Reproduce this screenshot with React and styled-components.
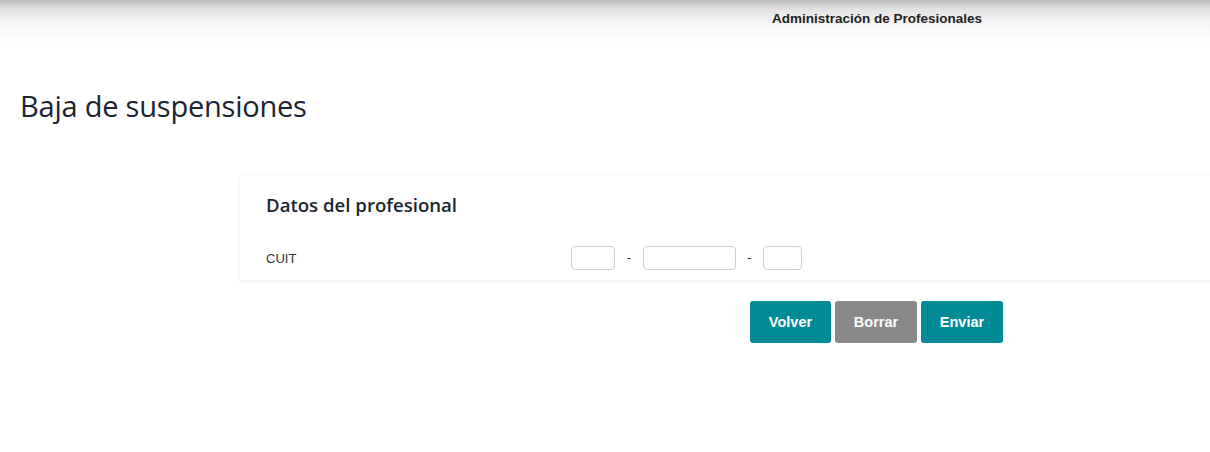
import React from "react";
import styled, { createGlobalStyle } from "styled-components";

const Global = createGlobalStyle`
  html, body { margin: 0; padding: 0; background: #fff; }
  body { font-family: "Liberation Sans", Arial, sans-serif; overflow: hidden; }
  * { box-sizing: border-box; }
`;

const Page = styled.div`
  width: 1210px;
  min-height: 452px;
  background: #fff;
`;

const Header = styled.header`
  height: 48px;
  background: linear-gradient(to bottom, #bdbdbd 0px, #e4e4e4 10px, #f6f6f6 24px, #ffffff 44px);
  display: flex;
  padding-left: 772px;
  padding-top: 11px;
`;

const HeaderTitle = styled.span`
  font-family: "Liberation Sans", Arial, sans-serif;
  font-weight: bold;
  font-size: 13.5px;
  color: #222;
  line-height: 16px;
`;

const Title = styled.h1`
  margin: 38px 0 0 20px;
  font-family: "Open Sans", "Noto Sans", sans-serif;
  font-weight: 400;
  font-size: 29px;
  line-height: 40px;
  color: #1a2530;
  letter-spacing: -0.22px;
`;

const Section = styled.div`
  margin: 50px 0 0 240px;
  display: flex;
  flex-direction: column;
`;

const Card = styled.div`
  background: #fff;
  box-shadow: 0 1px 5px rgba(0, 0, 0, 0.09);
  padding: 16px 26px 10px;
  margin-right: -20px;
`;

const CardTitle = styled.h2`
  margin: 0;
  font-family: "Open Sans", "Noto Sans", sans-serif;
  font-weight: 600;
  font-size: 18.6px;
  line-height: 26px;
  color: #1a2530;
`;

const FieldRow = styled.div`
  display: grid;
  grid-template-columns: 305px auto;
  align-items: center;
  margin-top: 28px;
`;

const Label = styled.label`
  font-size: 13px;
  color: #333;
`;

const CuitGroup = styled.div`
  display: flex;
  align-items: center;
`;

const Box = styled.input`
  width: ${(p) => p.$w}px;
  height: 24px;
  border: 1px solid #cfcfcf;
  border-radius: 4px;
  background: #fff;
  padding: 0 4px;
  font-size: 13px;
  outline: none;
`;

const Dash = styled.span`
  width: ${(p) => p.$w}px;
  text-align: center;
  font-size: 13px;
  color: #333;
  position: relative;
  top: -1px;
`;

const Actions = styled.div`
  display: flex;
  gap: 4px;
  margin: 21px 0 0 510px;
`;

const Button = styled.button`
  width: ${(p) => p.$w}px;
  height: 42px;
  border: none;
  border-radius: 3px;
  background: ${(p) => (p.$gray ? "#898989" : "#008a96")};
  color: #fff;
  font-family: "Liberation Sans", Arial, sans-serif;
  font-weight: bold;
  font-size: 14.5px;
  cursor: pointer;
`;

export default function App() {
  return (
    <Page>
      <Global />
      <Header>
        <HeaderTitle>Administración de Profesionales</HeaderTitle>
      </Header>
      <Title>Baja de suspensiones</Title>
      <Section>
        <Card>
          <CardTitle>Datos del profesional</CardTitle>
          <FieldRow>
            <Label>CUIT</Label>
            <CuitGroup>
              <Box $w={44} />
              <Dash $w={28}>-</Dash>
              <Box $w={93} />
              <Dash $w={27}>-</Dash>
              <Box $w={39} />
            </CuitGroup>
          </FieldRow>
        </Card>
        <Actions>
          <Button $w={81}>Volver</Button>
          <Button $w={82} $gray>Borrar</Button>
          <Button $w={82}>Enviar</Button>
        </Actions>
      </Section>
    </Page>
  );
}
